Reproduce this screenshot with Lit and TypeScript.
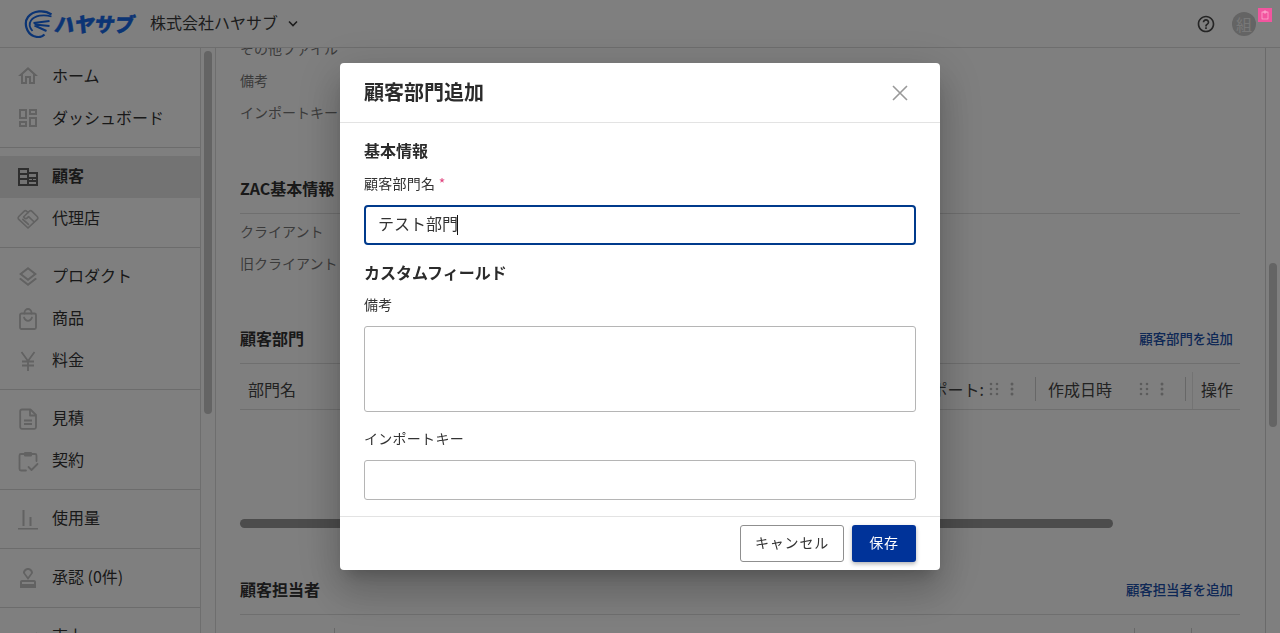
import { LitElement, html, css, svg } from 'lit';
import { customElement } from 'lit/decorators.js';

const filled = (d: string) => svg`<path d=${d} fill="currentColor"></path>`;

// sidebar icons, 24 box
const icons: Record<string, unknown> = {
  home: filled('m12 5.69 5 4.5V18h-2v-6H9v6H7v-7.81zM12 3 2 12h3v8h6v-6h2v6h6v-8h3z'),
  dash: filled('M19 5v2h-4V5zM9 5v6H5V5zm10 8v6h-4v-6zM9 17v2H5v-2zM21 3h-8v6h8zM11 3H3v10h8zm10 8h-8v10h8zm-10 4H3v6h8z'),
  customer: filled('M2 3h11v4h9v14H2zM4 5v3h7V5zm0 5v3h7v-3zm0 5v4h7v-4zm9-6v3h7V9zm0 5v1h3v-1zm4 0v1h3v-1zm-4 3v2h7v-2z'),
  shake: svg`<g fill="none" stroke="currentColor" stroke-width="1.7" stroke-linejoin="round" stroke-linecap="round"><path d="M12 21 2.8 12.4a2 2 0 0 1 0-2.9L8 4.4a2 2 0 0 1 2.8 0l1.2 1.1 1.2-1.1a2 2 0 0 1 2.8 0l5.2 5.1a2 2 0 0 1 0 2.9z"></path><path d="M12 5.5 7.5 10l1.2 1.2a1.6 1.6 0 0 0 2.3 0l1.6-1.6 5.6 5.4M9 14.2l3.4 3.2M6.8 12.4l3 2.8"></path></g>`,
  layers: filled('m11.99 18.54-7.37-5.73L3 14.07l9 7 9-7-1.63-1.27zM12 16l7.36-5.73L21 9l-9-7-9 7 1.63 1.27zm0-11.47L17.74 9 12 13.47 6.26 9z'),
  bag: svg`<g fill="none" stroke="currentColor" stroke-width="1.8" stroke-linecap="round"><rect x="4" y="6.5" width="16" height="15.5" rx="1.5"></rect><path d="M8.5 6.5V5.5a3.5 3.5 0 0 1 7 0v1M8 10.5c.8 2.2 2.2 3.3 4 3.3s3.2-1.1 4-3.3"></path></g>`,
  yen: svg`<path d="M5.5 3 12 12l6.5-9M12 12v10M6 12.5h12M6 16.5h12" fill="none" stroke="currentColor" stroke-width="1.8"></path>`,
  doc: svg`<g fill="none" stroke="currentColor" stroke-width="1.8" stroke-linejoin="round"><path d="M6 2.5h8.5L20 8v12a1.8 1.8 0 0 1-1.8 1.8H6A1.8 1.8 0 0 1 4.2 20V4.3A1.8 1.8 0 0 1 6 2.5z"></path><path d="M14 2.5V8.5h6M8 13.5h8M8 17h8"></path></g>`,
  contract: svg`<g fill="none" stroke="currentColor" stroke-width="1.8" stroke-linecap="round" stroke-linejoin="round"><path d="M8 5H5a1.5 1.5 0 0 0-1.5 1.5V20A1.5 1.5 0 0 0 5 21.5h5M16 5h3a1.5 1.5 0 0 1 1.5 1.5V12"></path><path d="m12.5 18 3 3 6-6"></path></g><rect x="8" y="3" width="8" height="4.5" rx="1" fill="currentColor"></rect>`,
  usage: svg`<g fill="currentColor"><rect x="6.5" y="3" width="2" height="16"></rect><rect x="13.5" y="10" width="2" height="9"></rect><rect x="2" y="21" width="20" height="1.5"></rect></g>`,
  stamp: filled('M4 16v6h16v-6c0-1.1-.9-2-2-2H6c-1.1 0-2 .9-2 2zm14 2H6v-2h12v2zM12 2C9.24 2 7 4.24 7 7l5 7 5-7c0-2.76-2.24-5-5-5zm0 9L9 7c0-1.66 1.34-3 3-3s3 1.34 3 3l-3 4z'),
  sales: svg`<path d="m4 18 6-6 4 4 7-8" fill="none" stroke="currentColor" stroke-width="1.8"></path>`,
};

const navGroups = [
  [['home', 'ホーム'], ['dash', 'ダッシュボード']],
  [['customer', '顧客', 'on'], ['shake', '代理店']],
  [['layers', 'プロダクト'], ['bag', '商品'], ['yen', '料金']],
  [['doc', '見積'], ['contract', '契約']],
  [['usage', '使用量']],
  [['stamp', '承認 (0件)']],
  [['sales', '売上']],
];

const gripIcon = html`<svg class="grip" viewBox="0 0 12 14" width="12" height="14">
  ${[2, 7, 12].map((y) => svg`<circle cx="3" cy=${y} r="1.3"></circle><circle cx="9" cy=${y} r="1.3"></circle>`)}
</svg>`;
const kebabIcon = html`<svg class="grip" viewBox="0 0 6 14" width="6" height="14">
  ${[2, 7, 12].map((y) => svg`<circle cx="3" cy=${y} r="1.5"></circle>`)}
</svg>`;

@customElement('app-root')
export class AppRoot extends LitElement {
  static styles = css`
    :host {
      display: block;
      height: 633px;
      overflow: hidden;
      background: #fff;
      color: #2e2e2e;
      font-family: 'Noto Sans CJK JP', 'Noto Sans', sans-serif;
    }
    .top {
      display: flex;
      align-items: center;
      height: 47px;
      padding: 0 16px 0 24px;
      border-bottom: 1px solid #dcdcdc;
    }
    .logo {
      display: flex;
      align-items: center;
      gap: 2px;
      width: 126px;
      flex: none;
      color: #1668e8;
    }
    .logo b {
      display: inline-block;
      font-size: 20px;
      line-height: 24px;
      font-weight: 900;
      transform: skewX(-10deg);
      white-space: nowrap;
      -webkit-text-stroke: 0.5px currentColor;
    }
    .company {
      padding-bottom: 3px;
      font-size: 16px;
      color: #3a3a3a;
    }
    .chev {
      margin-left: 9px;
      color: #3a3a3a;
    }
    .spacer {
      flex: 1;
    }
    .help {
      color: #4a4a4a;
      margin-right: 16px;
    }
    .avatar {
      display: grid;
      place-items: center;
      width: 24px;
      height: 24px;
      margin-right: 8px;
      border-radius: 50%;
      background: #c8c8c8;
      color: #f0f0f0;
      font-size: 16px;
      line-height: 24px;
    }
    .badge {
      position: absolute;
      top: 8px;
      left: 1258px;
      z-index: 1400;
      display: grid;
      place-items: center;
      width: 14px;
      height: 14px;
      background: #f2559f;
    }
    .body {
      display: flex;
      height: 585px;
    }
    .side {
      width: 200px;
      flex: none;
      overflow: hidden;
      border-right: 1px solid #dcdcdc;
    }
    .group {
      padding: 8px 0 7px;
      border-bottom: 1px solid #d8d8d8;
    }
    .group:first-child {
      padding: 7px 0 8px;
    }
    .group.single {
      padding-bottom: 8px;
    }
    .item {
      display: flex;
      align-items: center;
      gap: 12px;
      height: 42px;
      padding-left: 16px;
      font-size: 16px;
      color: #333;
    }
    .item span {
      padding-bottom: 4px;
    }
    .group:first-child .item span {
      padding-bottom: 2px;
    }
    .item svg {
      color: #c4c4c4;
      flex: none;
    }
    .item.on {
      background: #e6e6e6;
      font-weight: 700;
    }
    .item.on svg {
      color: #5c5c5c;
    }
    .track {
      width: 8px;
      flex: none;
      padding: 3px 3px 0;
      border-right: 1px solid #dcdcdc;
    }
    .thumb {
      height: 363px;
      border-radius: 4px;
      background: #c8c8c8;
    }
    .main {
      flex: 1;
      min-width: 0;
      overflow: hidden;
      padding: 0 25px 0 24px;
    }
    .scroll {
      margin-top: -14px;
    }
    .rows div {
      height: 32px;
      line-height: 29px;
      font-size: 14px;
      color: #777;
    }
    .head {
      display: flex;
      justify-content: space-between;
      align-items: center;
      height: 18px;
      padding-bottom: 16px;
      border-bottom: 1px solid #dedede;
    }
    .head h3 {
      margin: 0;
      font-size: 16px;
      line-height: 24px;
      color: #333;
    }
    .head a {
      margin-right: 7px;
      font-size: 13.4px;
      font-weight: 500;
      color: #1c50ac;
    }
    .zac {
      margin-top: 49px;
    }
    .zac .rows {
      padding-top: 3px;
    }
    .dept {
      margin-top: 48px;
    }
    .thead {
      display: grid;
      grid-template-columns: 1fr 150px 150px 54px;
      height: 46px;
      padding-top: 4px;
      box-sizing: border-box;
      border-bottom: 1px solid #dedede;
      font-size: 16px;
      color: #444;
    }
    .th {
      display: flex;
      align-items: center;
      min-width: 0;
    }
    .th.first {
      padding-left: 8px;
    }
    .th.end {
      justify-content: flex-end;
      gap: 4px;
    }
    .grips {
      display: flex;
      gap: 9px;
    }
    .grips.far {
      margin-left: 22px;
    }
    .th.end i {
      display: block;
      width: 1px;
      height: 24px;
      margin-left: 16px;
      background: #cfcfcf;
    }
    .th.ops {
      justify-content: flex-end;
      padding: 0 7px 4px 0;
      border-left: 1px solid #e6e6e6;
      margin-top: 4px;
      margin-left: 6px;
    }
    .grip {
      fill: #b8b8b8;
      flex: none;
    }
    .hbar {
      width: 873px;
      height: 9px;
      margin-top: 109px;
      border-radius: 5px;
      background: #989898;
    }
    .people {
      margin-top: 52px;
    }
    .ticks {
      display: grid;
      grid-template-columns: 95px 1fr 57px 48px;
      height: 19px;
      padding-top: 13px;
      box-sizing: border-box;
    }
    .ticks div {
      border-right: 1px solid #d0d0d0;
    }
    .ticks div:last-child {
      border: 0;
    }
    .vtrack {
      width: 15px;
      flex: none;
      border-left: 1px solid #d4d4d4;
      padding: 215px 3px 0;
      box-sizing: border-box;
    }
    .vtrack div {
      height: 164px;
      width: 8px;
      border-radius: 4px;
      background: #c8c8c8;
    }
    .overlay {
      position: fixed;
      inset: 0;
      z-index: 1300;
      display: flex;
      justify-content: center;
      align-items: flex-start;
      padding-top: 63px;
      box-sizing: border-box;
      background: rgba(0, 0, 0, 0.5);
    }
    .dialog {
      width: 600px;
      height: 507px;
      display: flex;
      flex-direction: column;
      background: #fff;
      border-radius: 4px;
      box-shadow: 0 11px 15px -7px rgba(0, 0, 0, 0.2), 0 24px 38px 3px rgba(0, 0, 0, 0.14),
        0 9px 46px 8px rgba(0, 0, 0, 0.12);
    }
    .d-head {
      display: flex;
      justify-content: space-between;
      align-items: center;
      flex: none;
      height: 59px;
      padding: 0 32px 0 24px;
      border-bottom: 1px solid #e3e3e3;
    }
    .d-head h2 {
      margin: 0 0 2px;
      font-size: 20px;
      line-height: 28px;
      font-weight: 700;
      color: #2b2b2b;
    }
    .d-head svg {
      color: #999;
    }
    .d-body {
      flex: 1;
      min-height: 0;
      padding: 15px 24px 0;
      overflow: hidden;
    }
    .d-body h4 {
      margin: 0;
      font-size: 16px;
      line-height: 24px;
      font-weight: 700;
      color: #2b2b2b;
    }
    label {
      display: block;
      font-size: 14px;
      line-height: 20px;
      color: #333;
      letter-spacing: 0.02em;
    }
    label span {
      color: #e0457f;
    }
    .name-label {
      margin: 11px 0 12px;
    }
    .d-body .custom {
      margin-top: 15px;
    }
    .note-label {
      margin: 10px 0 12px;
    }
    .key-label {
      margin: 16px 0 12px;
    }
    .focus {
      display: flex;
      align-items: center;
      height: 40px;
      padding: 0 12px 5px;
      box-sizing: border-box;
      border: 2px solid #003a8c;
      border-radius: 4px;
      font-size: 16px;
      color: #333;
    }
    .caret {
      width: 1px;
      height: 20px;
      background: #111;
      margin-left: -1px;
      margin-top: 5px;
    }
    textarea,
    input {
      display: block;
      width: 100%;
      box-sizing: border-box;
      margin: 0;
      border: 1px solid #b5b5b5;
      border-radius: 3px;
      background: #fff;
      outline: none;
      resize: none;
    }
    textarea {
      height: 86px;
    }
    input {
      height: 40px;
    }
    .d-foot {
      display: flex;
      justify-content: flex-end;
      align-items: flex-start;
      flex: none;
      gap: 8px;
      height: 54px;
      padding: 8px 24px 0;
      border-top: 1px solid #e3e3e3;
      box-sizing: border-box;
    }
    button {
      height: 37px;
      padding: 0 0 4px;
      border-radius: 3px;
      font: inherit;
      font-size: 14px;
      letter-spacing: 0.06em;
    }
    .cancel {
      width: 104px;
      border: 1px solid #8f8f8f;
      background: #fff;
      color: #333;
    }
    .save {
      width: 64px;
      border: 0;
      background: #003399;
      color: #fff;
      box-shadow: 0 2px 4px rgba(0, 0, 0, 0.3);
    }
  `;

  render() {
    return html`
      <header class="top">
        <div class="logo">
          <svg viewBox="0 0 28 28" width="29" height="28" fill="none" stroke="currentColor" style="flex:none">
            <path d="M27 4.5C20 -0.5 8.5 0.5 3.5 7 -1 13 2 23 9 26c4.5 1.8 8.5 1 11-1.5" stroke-width="2.2"></path>
            <path d="M27 6.5C19 4 10 5.5 6.5 10.5c-2 3 -1.5 7 1.5 10.5" stroke-width="1.8"></path>
            <path d="M9 13 25 11M10 14.5 25 16M10 15.5 22 21" stroke-width="2"></path>
          </svg>
          <b>ハヤサブ</b>
        </div>
        <span class="company">株式会社ハヤサブ</span>
        <svg class="chev" viewBox="0 0 12 8" width="12" height="8" fill="none" stroke="currentColor" stroke-width="1.6">
          <path d="m2 1.5 4 4 4-4"></path>
        </svg>
        <span class="spacer"></span>
        <svg class="help" viewBox="0 0 24 24" width="20" height="20">
          <path fill="currentColor" d="M11 18h2v-2h-2v2zm1-16C6.48 2 2 6.48 2 12s4.48 10 10 10 10-4.48 10-10S17.52 2 12 2zm0 18c-4.41 0-8-3.59-8-8s3.59-8 8-8 8 3.59 8 8-3.59 8-8 8zm0-14c-2.21 0-4 1.79-4 4h2c0-1.1.9-2 2-2s2 .9 2 2c0 2-3 1.75-3 5h2c0-2.25 3-2.5 3-5 0-2.21-1.79-4-4-4z"></path>
        </svg>
        <div class="avatar">組</div>
      </header>
      <div class="badge">
        <svg viewBox="0 0 10 10" width="10" height="10" fill="none" stroke="#ffc4dc" stroke-width="0.6">
          <rect x="2" y="2" width="6" height="7"></rect>
          <path d="M4 1v2h2V1z"></path>
        </svg>
      </div>
      <div class="body">
        <nav class="side">
          ${navGroups.map(
            (group, i) => html`<div class="group ${group.length === 1 && i < 6 ? 'single' : ''}">
              ${group.map(
                ([icon, label, on]) => html`<div class="item ${on ? 'on' : ''}">
                  <svg viewBox="0 0 24 24" width="24" height="24">${icons[icon]}</svg>
                  <span>${label}</span>
                </div>`,
              )}
            </div>`,
          )}
        </nav>
        <div class="track"><div class="thumb"></div></div>
        <main class="main">
          <div class="scroll">
            <div class="rows">
              <div>その他ファイル</div>
              <div>備考</div>
              <div>インポートキー</div>
            </div>
            <section class="zac">
              <div class="head"><h3>ZAC基本情報</h3></div>
              <div class="rows">
                <div>クライアント</div>
                <div>旧クライアント</div>
              </div>
            </section>
            <section class="dept">
              <div class="head"><h3>顧客部門</h3><a>顧客部門を追加</a></div>
              <div class="thead">
                <div class="th first">部門名</div>
                <div class="th end"><span>インポート:</span><span class="grips">${gripIcon}${kebabIcon}</span><i></i></div>
                <div class="th end"><span>作成日時</span><span class="grips far">${gripIcon}${kebabIcon}</span><i></i></div>
                <div class="th ops">操作</div>
              </div>
              <div class="hbar"></div>
            </section>
            <section class="people">
              <div class="head"><h3>顧客担当者</h3><a>顧客担当者を追加</a></div>
              <div class="ticks"><div></div><div></div><div></div><div></div></div>
            </section>
          </div>
        </main>
        <div class="vtrack"><div></div></div>
      </div>
      <div class="overlay">
        <div class="dialog" role="dialog">
          <div class="d-head">
            <h2>顧客部門追加</h2>
            <svg viewBox="0 0 16 16" width="16" height="16" fill="none" stroke="currentColor" stroke-width="1.6">
              <path d="m1 1 14 14M15 1 1 15"></path>
            </svg>
          </div>
          <div class="d-body">
            <h4>基本情報</h4>
            <label class="name-label">顧客部門名 <span>*</span></label>
            <div class="focus">テスト部門<span class="caret"></span></div>
            <h4 class="custom">カスタムフィールド</h4>
            <label class="note-label">備考</label>
            <textarea></textarea>
            <label class="key-label">インポートキー</label>
            <input type="text" />
          </div>
          <div class="d-foot">
            <button class="cancel">キャンセル</button>
            <button class="save">保存</button>
          </div>
        </div>
      </div>
    `;
  }
}
